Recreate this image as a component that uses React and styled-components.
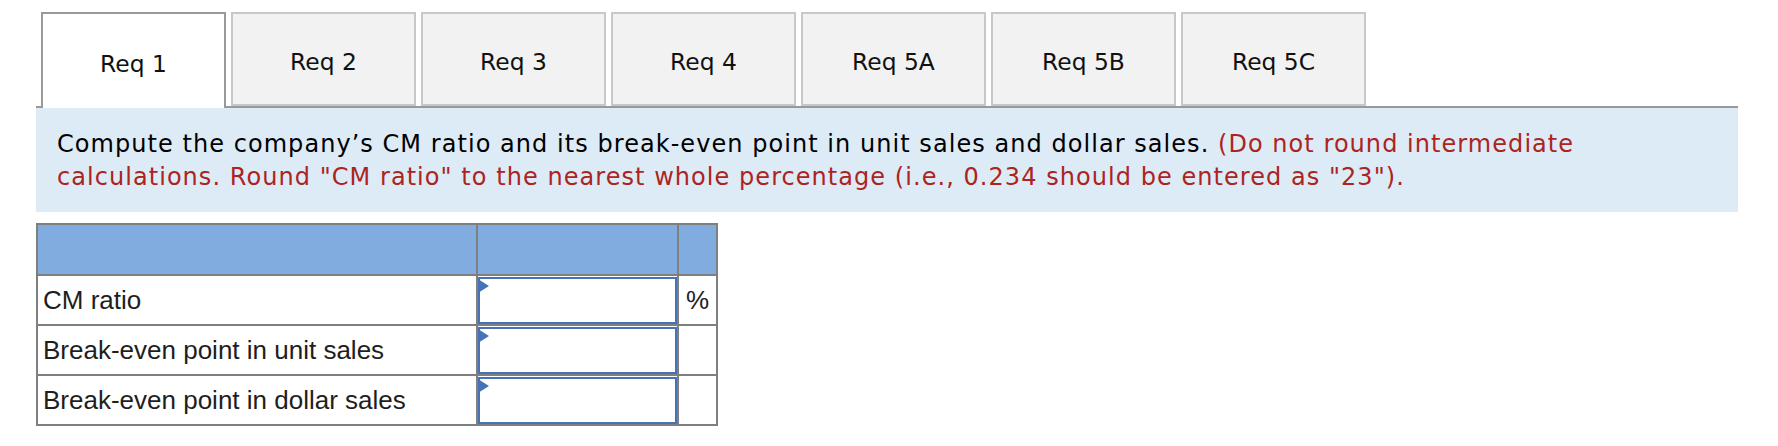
import React from "react";
import styled, { createGlobalStyle } from "styled-components";

const GlobalStyle = createGlobalStyle`
  body {
    margin: 0;
    background: #ffffff;
  }
`;

const Page = styled.div`
  width: 1702px;
  padding: 12px 0 0 36px;
`;

const TabBar = styled.div`
  display: flex;
  align-items: flex-start;
  gap: 5px;
  padding-left: 5px;
  border-bottom: 2px solid #999999;
  height: 94px;
`;

const Tab = styled.div`
  box-sizing: border-box;
  width: 185px;
  height: ${(p) => (p.$active ? "96px" : "94px")};
  display: flex;
  align-items: center;
  justify-content: center;
  padding-top: 5px;
  border: 2px solid ${(p) => (p.$active ? "#999999" : "#c8c8c8")};
  border-bottom: ${(p) => (p.$active ? "none" : "2px solid #c8c8c8")};
  background: ${(p) => (p.$active ? "#ffffff" : "#f2f2f2")};
  position: relative;
  z-index: ${(p) => (p.$active ? 1 : 0)};
  font-family: "DejaVu Sans", Verdana, sans-serif;
  font-size: 23.4px;
  color: #111111;
  cursor: pointer;
`;

const Instructions = styled.div`
  background: #ddebf7;
  padding: 20px 21px 18px;
  font-family: "DejaVu Sans", Verdana, sans-serif;
  font-size: 24px;
  letter-spacing: 1.05px;
  line-height: 33px;
  color: #000000;
`;

const Note = styled.span`
  color: #ad231d;
`;

const Table = styled.table`
  margin-top: 11px;
  border-collapse: collapse;
  table-layout: fixed;
  width: 680px;
  font-family: "Liberation Sans", Arial, sans-serif;
  font-size: 26px;
  color: #1e1e1e;

  td,
  th {
    border: 2px solid #7f7f7f;
    padding: 0;
  }
`;

const HeadRow = styled.tr`
  height: 51px;
  background: #80acdf;
`;

const Row = styled.tr`
  height: 50px;
`;

const Label = styled.td`
  padding-left: 5px !important;
  text-align: left;
`;

const Unit = styled.td`
  text-align: center;
`;

const InputCell = styled.td`
  position: relative;
`;

const AnswerBox = styled.div`
  box-sizing: border-box;
  height: 47px;
  border: 2px solid #4672b8;
  position: relative;

  &::before {
    content: "";
    position: absolute;
    left: -2px;
    top: 0;
    border-left: 11px solid #4672b8;
    border-top: 7px solid transparent;
    border-bottom: 7px solid transparent;
  }
`;

const tabs = ["Req 1", "Req 2", "Req 3", "Req 4", "Req 5A", "Req 5B", "Req 5C"];

const rows = [
  { label: "CM ratio", unit: "%" },
  { label: "Break-even point in unit sales", unit: "" },
  { label: "Break-even point in dollar sales", unit: "" },
];

export default function App() {
  return (
    <Page>
      <GlobalStyle />
      <TabBar>
        {tabs.map((t, i) => (
          <Tab key={t} $active={i === 0}>
            {t}
          </Tab>
        ))}
      </TabBar>

      <Instructions>
        Compute the company’s CM ratio and its break-even point in unit sales and dollar sales.{" "}
        <Note>
          (Do not round intermediate calculations. Round "CM ratio" to the nearest whole percentage
          (i.e., 0.234 should be entered as "23").
        </Note>
      </Instructions>

      <Table>
        <colgroup>
          <col style={{ width: 440 }} />
          <col style={{ width: 201 }} />
          <col style={{ width: 39 }} />
        </colgroup>
        <thead>
          <HeadRow>
            <th />
            <th />
            <th />
          </HeadRow>
        </thead>
        <tbody>
          {rows.map((r) => (
            <Row key={r.label}>
              <Label>{r.label}</Label>
              <InputCell>
                <AnswerBox />
              </InputCell>
              <Unit>{r.unit}</Unit>
            </Row>
          ))}
        </tbody>
      </Table>
    </Page>
  );
}
